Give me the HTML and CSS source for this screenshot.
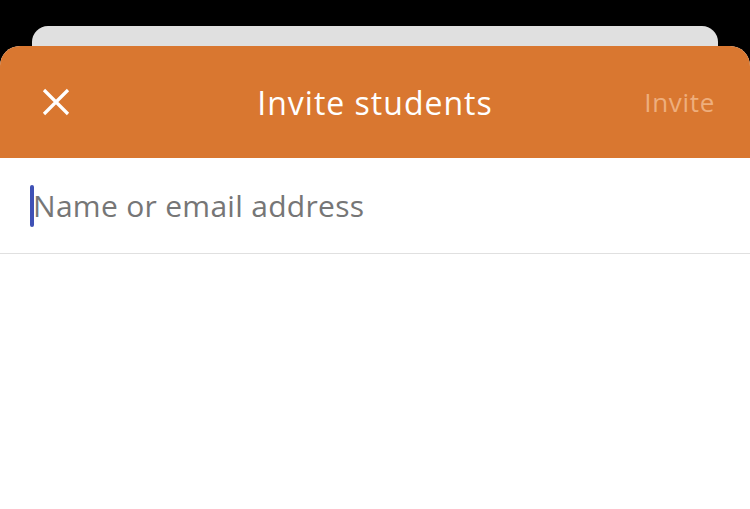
FILE: index.html
```html
<!DOCTYPE html>
<html>
<head>
<meta charset="utf-8">
<link rel="stylesheet" href="styles.css">
</head>
<body>
<div class="screen">
  <div class="behind"></div>
  <div class="sheet">
    <header class="bar">
      <button class="close" aria-label="Close">
        <svg width="28" height="28" viewBox="0 0 28 28"><path d="M2 2 L26 26 M26 2 L2 26" stroke="#fff" stroke-width="3.2" stroke-linecap="butt"/></svg>
      </button>
      <h1 class="title">Invite students</h1>
      <span class="action">Invite</span>
    </header>
    <div class="field">
      <span class="caret"></span><span class="placeholder">Name or email address</span>
    </div>
  </div>
</div>
</body>
</html>
```
FILE: styles.css
```css
* { box-sizing: border-box; }
html, body { margin: 0; padding: 0; }
body { background: #000; font-family: "Open Sans", Roboto, sans-serif; }
.screen { width: 750px; height: 509px; display: flex; flex-direction: column; padding-top: 26px; overflow: hidden; }
.behind { height: 40px; margin: 0 32px -20px; background: #e0e0e0; border-radius: 16px 16px 0 0; flex: none; }
.sheet { flex: 1; background: #fff; border-radius: 20px 20px 0 0; overflow: hidden; position: relative; }
.bar { height: 112px; background: #d97730; display: flex; align-items: center; position: relative; padding: 0 35px 0 42px; }
.close { background: none; border: 0; padding: 0; width: 28px; height: 28px; display: flex; }
.title { position: absolute; left: 0; right: 0; text-align: center; margin: 0; font-weight: 400; font-size: 32px; letter-spacing: 1px; color: #fff; pointer-events: none; }
.action { margin-left: auto; font-size: 26px; letter-spacing: 0.7px; color: #eeae7d; }
.field { height: 96px; border-bottom: 1px solid #e0e0e0; display: flex; align-items: center; padding-left: 30px; }
.caret { width: 4px; height: 42px; background: #3f51b5; border-radius: 2px; margin-right: -1px; }
.placeholder { font-size: 30px; letter-spacing: 0.3px; color: #767676; }
```
